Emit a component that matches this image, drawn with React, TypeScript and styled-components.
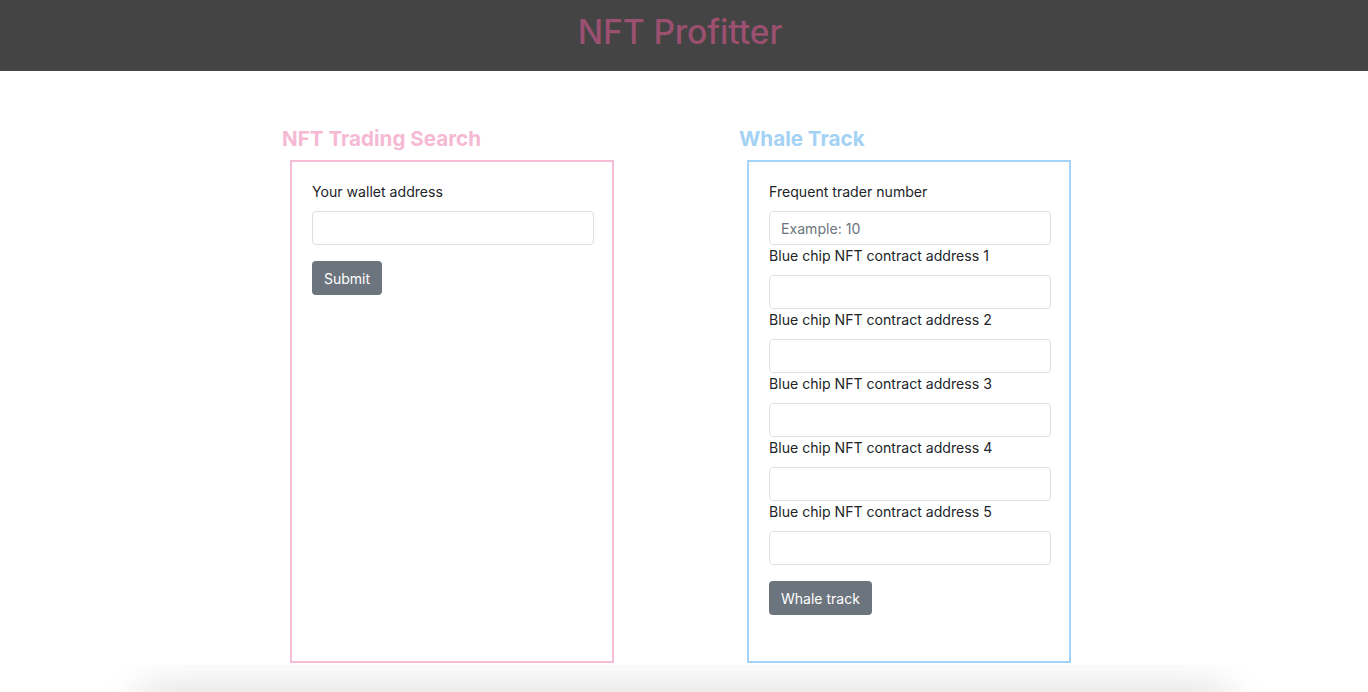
import React from "react";
import styled, { createGlobalStyle } from "styled-components";

const Global = createGlobalStyle`
  html, body { margin: 0; padding: 0; background: #fff; overflow: hidden; }
  body { font-family: Inter, "Liberation Sans", Arial, sans-serif; color: #212529; }
  * { box-sizing: border-box; }
`;

const Page = styled.div`
  display: flex;
  flex-direction: column;
  height: 692px;
`;

const Header = styled.header`
  height: 71px;
  background: #444444;
  display: flex;
  align-items: center;
  justify-content: center;
`;

const Title = styled.h1`
  margin: 0 8px 8px 0;
  font-size: 33.6px;
  font-weight: 500;
  color: #9b5070;
  letter-spacing: -0.1px;
`;

const Main = styled.main`
  flex: 1;
  display: flex;
  justify-content: flex-start;
  padding: 55px 0 0 282px;
  gap: 115px;
`;

const Column = styled.section`
  width: 342px;
  display: flex;
  flex-direction: column;
`;

const Heading = styled.h2<{ $color: string }>`
  margin: 0 0 9px;
  font-size: 20.6px;
  line-height: 25px;
  font-weight: 700;
  color: ${(p) => p.$color};
`;

const Box = styled.div<{ $color: string }>`
  margin-left: 8px;
  width: 324px;
  height: 503px;
  border: 2.5px solid ${(p) => p.$color};
  padding: 19px 18px 20px 20px;
  display: flex;
  flex-direction: column;
`;

const Label = styled.label`
  font-size: 14.1px;
  line-height: 22px;
  margin-bottom: 8px;
  color: #212529;
`;

const Input = styled.input`
  width: 100%;
  height: 34px;
  border: 1px solid #dcdfe3;
  border-radius: 4px;
  padding: 0 11px;
  font-family: inherit;
  font-size: 14.1px;
  color: #212529;
  outline: none;
  &::placeholder { color: #6c757d; }
`;

const Button = styled.button`
  align-self: flex-start;
  margin-top: 16px;
  height: 34px;
  padding: 0 12px;
  background: #6c757d;
  color: #fff;
  border: none;
  border-radius: 4px;
  font-family: inherit;
  font-size: 14px;
`;

const Shade = styled.div`
  height: 27px;
  overflow: hidden;
  padding: 0 60px;
`;

const ShadeBlob = styled.div`
  margin: 42px 90px 0;
  height: 30px;
  background: #c4c4c4;
  border-radius: 30px;
  box-shadow: 0 0 40px 20px rgba(0, 0, 0, 0.13);
`;

const pink = "#f6bdd6";
const blue = "#a6d3f5";

export default function App() {
  const addrs = [1, 2, 3, 4, 5];
  return (
    <Page>
      <Global />
      <Header>
        <Title>NFT Profitter</Title>
      </Header>
      <Main>
        <Column>
          <Heading $color="#f6b9d4">NFT Trading Search</Heading>
          <Box $color={pink}>
            <Label>Your wallet address</Label>
            <Input />
            <Button>Submit</Button>
          </Box>
        </Column>
        <Column>
          <Heading $color="#a3d2f5">Whale Track</Heading>
          <Box $color={blue}>
            <Label>Frequent trader number</Label>
            <Input placeholder="Example: 10" />
            {addrs.map((n) => (
              <React.Fragment key={n}>
                <Label>Blue chip NFT contract address {n}</Label>
                <Input />
              </React.Fragment>
            ))}
            <Button>Whale track</Button>
          </Box>
        </Column>
      </Main>
      <Shade>
        <ShadeBlob />
      </Shade>
    </Page>
  );
}
